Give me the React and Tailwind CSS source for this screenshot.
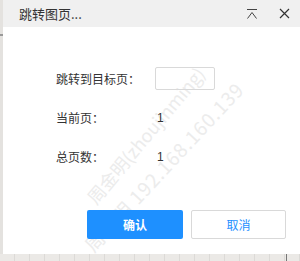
import React from 'react';

const ticks = Array.from({ length: 20 });

// collapse icon in title bar: bar on top with chevron below
const CollapseIcon = () => (
  <svg width="12" height="12" viewBox="0 0 12 12" fill="none" stroke="#444" strokeWidth="1">
    <path d="M1 1.5h10" />
    <path d="M1.5 10.5L6 4.5l4.5 6" />
  </svg>
);

const CloseIcon = () => (
  <svg width="11" height="11" viewBox="0 0 11 11" fill="none" stroke="#333" strokeWidth="1.2">
    <path d="M1 1l9 9M10 1l-9 9" />
  </svg>
);

// faint diagonal watermark; each line is centred on a point
const Watermark = () => (
  <div className="pointer-events-none absolute inset-0 overflow-hidden select-none">
    <div className="absolute left-[142px] top-[99px] flex h-[18px] w-0 -rotate-[50deg] items-center justify-center">
      <span className="whitespace-nowrap text-[18px] leading-none text-[#ececec]">周金明(zhoujinming)</span>
    </div>
    <div className="absolute left-[160px] top-[130px] flex h-[18px] w-0 -rotate-[47deg] items-center justify-center">
      <span className="whitespace-nowrap text-[19px] leading-none tracking-[1px] text-[#ececec]">周金明 192.168.160.139</span>
    </div>
  </div>
);

export default function App() {
  return (
    <div
      className="relative flex h-[261px] w-[300px] flex-col overflow-hidden bg-white text-[#333]"
      style={{ fontFamily: '"Noto Sans CJK SC", "Noto Sans", sans-serif' }}
    >
      <div className="flex flex-1">
        <div className="relative w-[3px] bg-[#e4e2df]">
          <div className="absolute left-0 top-[34px] h-[2px] w-[3px] bg-[#999]" />
        </div>
        <div className="flex flex-1 flex-col">
          {/* title bar */}
          <div className="flex h-[27px] items-center bg-[#f0f0f0] pl-[16px] pr-[10px]">
            <span className="text-[13px] text-[#333]">跳转图页...</span>
            <div className="ml-auto flex items-center gap-[21px]">
              <CollapseIcon />
              <CloseIcon />
            </div>
          </div>

          {/* body */}
          <div className="relative flex flex-1 flex-col">
            <Watermark />
            <div className="relative flex flex-col pl-[53px] pt-[40px] text-[12px]">
              <div className="flex h-[23px] items-center">
                <span className="w-[99px]">跳转到目标页：</span>
                <input className="h-[23px] w-[60px] rounded-[2px] border border-[#d9d9d9] bg-transparent outline-none" />
              </div>
              <div className="mt-[17px] flex h-[22px] items-center">
                <span className="w-[101px]">当前页：</span>
                <span className="text-[12px]" style={{ fontFamily: '"Liberation Sans", sans-serif' }}>1</span>
              </div>
              <div className="mt-[17px] flex h-[22px] items-center">
                <span className="w-[101px]">总页数：</span>
                <span className="text-[12px]" style={{ fontFamily: '"Liberation Sans", sans-serif' }}>1</span>
              </div>
            </div>
            <div className="relative mt-auto mb-[15px] flex gap-[8px] pl-[84px]">
              <button className="h-[29px] w-[96px] rounded-[2px] bg-[#1e90ff] text-[12px] font-bold text-white">
                确认
              </button>
              <button className="h-[29px] w-[95px] rounded-[2px] border border-[#d9d9d9] bg-white text-[12px] text-[#1e90ff]">
                取消
              </button>
            </div>
          </div>
        </div>
      </div>

      {/* bottom strip */}
      <div className="flex h-[7px] bg-[#ebe9e6]">
        {ticks.map((_, i) => (
          <div key={i} className="h-full w-[15px] shrink-0 border-r border-[#dcdad7]" />
        ))}
      </div>
      <div className="absolute bottom-0 left-[286px] h-[7px] w-[1px] bg-[#777]" />
    </div>
  );
}
